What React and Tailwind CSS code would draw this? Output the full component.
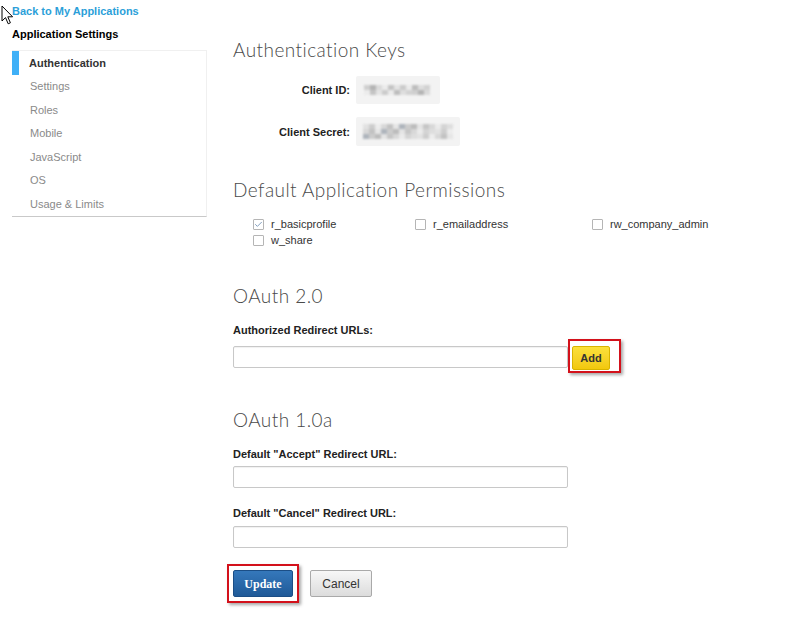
import { Check } from 'lucide-react';

const sans = { fontFamily: '"Liberation Sans", Arial, sans-serif' };

const navItems = ['Settings', 'Roles', 'Mobile', 'JavaScript', 'OS', 'Usage & Limits'];

const perms = [
  { name: 'r_basicprofile', checked: true },
  { name: 'r_emailaddress', checked: false },
  { name: 'rw_company_admin', checked: false },
  { name: 'w_share', checked: false },
];

// pixelated shades for the hidden keys
const idShades = ['#cfcfcf', '#b4b4b4', '#dadada', '#ececec', '#c4c4c4', '#e4e4e4', '#cbcbcb', '#ebebeb', '#bdbdbd', '#dedede', '#d2d2d2'];
const secretShades = ['#e2e2e2', '#cdcdcd', '#ededed', '#d8d8d8', '#c2c2c2', '#e6e6e6', '#aeb4bc', '#cccccc', '#bcbcbc', '#e4e4e4', '#c6c6c6', '#d8d8d8', '#ebebeb', '#d4d4d4', '#dedede'];

function Heading({ children, className = '' }) {
  return (
    <h2 className={`font-['Lato',sans-serif] font-light text-[19px] leading-[24px] text-[#4a4a4a] tracking-[0.45px] ${className}`}>
      {children}
    </h2>
  );
}

function Label({ children, className = '' }) {
  return <div className={`text-[11px] leading-[14px] font-bold text-[#222] ${className}`}>{children}</div>;
}

function TextInput({ className = '' }) {
  return (
    <input
      type="text"
      className={`block w-[335px] h-[22px] border border-[#c8c8c8] rounded-[2px] bg-white shadow-[inset_0_1px_1px_rgba(0,0,0,0.06)] outline-none ${className}`}
    />
  );
}

function RedBox({ className }) {
  return <span className={`absolute border-2 border-[#d3111b] shadow-[2px_2px_3px_rgba(0,0,0,0.35)] pointer-events-none ${className}`} />;
}

function Mosaic({ shades, rows = 2 }) {
  return (
    <div className="flex flex-col blur-[0.8px]">
      {Array.from({ length: rows }).map((_, r) => (
        <div key={r} className="flex">
          {shades.map((c, i) => (
            <span
              key={i}
              className="w-[6px] h-[5px]"
              style={{ backgroundColor: shades[(i + r * 3) % shades.length] }}
            />
          ))}
        </div>
      ))}
    </div>
  );
}

export default function App() {
  return (
    <div className="relative w-[791px] h-[640px] bg-white overflow-hidden text-[#333]" style={sans}>
      {/* mouse cursor */}
      <svg className="absolute left-[1px] top-[5px]" width="13" height="20" viewBox="0 0 13 20">
        <path d="M1 1 L1 16 L4.5 12.6 L7.2 18.8 L9.4 17.8 L6.8 11.8 L11.6 11.8 Z" fill="#fff" stroke="#000" strokeWidth="1" strokeLinejoin="round" />
      </svg>

      <div className="flex">
        {/* Sidebar */}
        <aside className="pl-[12px] pt-[4px] shrink-0">
          <a href="#" className="block text-[11px] leading-[14px] font-bold text-[#2c9fd9]">Back to My Applications</a>
          <div className="mt-[9px] text-[11px] leading-[14px] font-bold text-black">Application Settings</div>
          <ul className="mt-[9px] w-[195px] border-t border-r border-[#f0f0f0] border-b-[#c9c9c9] border-b">
            <li className="flex items-center h-[23.5px]">
              <span className="w-[7px] h-full bg-[#3fb0f7]" />
              <span className="pl-[10px] text-[11px] font-bold text-[#333]">Authentication</span>
            </li>
            {navItems.map((item) => (
              <li key={item} className="flex items-center h-[23.5px] pl-[18px] text-[11px] text-[#8a8a8a]">
                {item}
              </li>
            ))}
          </ul>
        </aside>

        {/* Main */}
        <main className="ml-[26px] pt-[38px] flex-1">
          <Heading>Authentication Keys</Heading>

          <div className="mt-[14px] flex items-center gap-[6px]">
            <Label className="w-[117px] text-right">Client ID:</Label>
            <div className="w-[84px] h-[28px] bg-[#f3f3f3] rounded-[2px] flex items-center pl-[8px] overflow-hidden">
              <Mosaic shades={idShades} />
            </div>
          </div>
          <div className="mt-[13px] flex items-center gap-[6px]">
            <Label className="w-[117px] text-right">Client Secret:</Label>
            <div className="w-[104px] h-[29px] bg-[#f3f3f3] rounded-[2px] flex items-center pl-[7px] overflow-hidden">
              <Mosaic shades={secretShades} rows={3} />
            </div>
          </div>

          <Heading className="mt-[32px]">Default Application Permissions</Heading>

          <div className="mt-[14px] ml-[20px] grid grid-cols-[162px_177px_auto]">
            {perms.map((p) => (
              <label key={p.name} className="flex items-center h-[16px] text-[11px] text-[#333]">
                <span className="w-[11px] h-[11px] border border-[#b5b5b5] rounded-[1px] bg-white flex items-center justify-center">
                  {p.checked && <Check size={9} strokeWidth={2} className="text-[#5a7fa8]" />}
                </span>
                <span className="ml-[7px]">{p.name}</span>
              </label>
            ))}
          </div>

          <Heading className="mt-[36px]">OAuth 2.0</Heading>
          <Label className="mt-[15px]">Authorized Redirect URLs:</Label>
          <div className="mt-[8px] flex items-start h-[24px]">
            <TextInput className="mt-[1px]" />
            <div className="relative ml-[4px]">
              <button className="w-[38px] h-[24px] rounded-[2px] border border-[#d9b400] bg-gradient-to-b from-[#fbe03a] to-[#f2c80a] text-[11px] font-bold text-[#333]">
                Add
              </button>
              <RedBox className="-left-[4px] -top-[6px] w-[53px] h-[34px]" />
            </div>
          </div>

          <Heading className="mt-[39px]">OAuth 1.0a</Heading>
          <Label className="mt-[15px]">Default "Accept" Redirect URL:</Label>
          <TextInput className="mt-[5px]" />
          <Label className="mt-[18px]">Default "Cancel" Redirect URL:</Label>
          <TextInput className="mt-[6px]" />

          <div className="mt-[22px] flex items-center gap-[17px]">
            <div className="relative">
              <button className="w-[60px] h-[27px] rounded-[2px] border border-[#1b4e86] bg-gradient-to-b from-[#3578bb] to-[#1f5a98] text-white text-[12px] font-bold font-['Liberation_Serif',serif]">
                Update
              </button>
              <RedBox className="-left-[6px] -top-[6px] w-[72px] h-[39px]" />
            </div>
            <button className="w-[62px] h-[27px] rounded-[2px] border border-[#a9a9a9] bg-gradient-to-b from-[#f7f7f7] to-[#dcdcdc] text-[12px] text-[#333]">
              Cancel
            </button>
          </div>
        </main>
      </div>
    </div>
  );
}
